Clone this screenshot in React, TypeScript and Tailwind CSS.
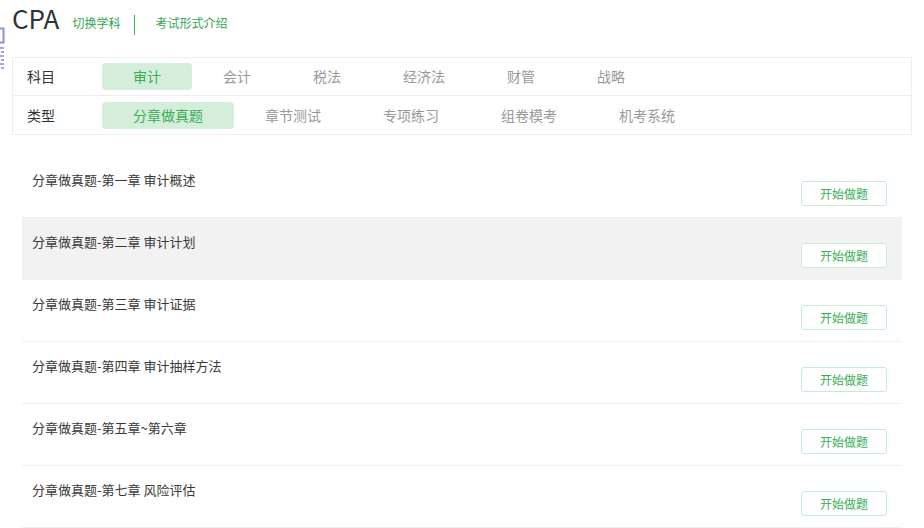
const subjects = ["审计", "会计", "税法", "经济法", "财管", "战略"] as const;
const types = ["分章做真题", "章节测试", "专项练习", "组卷模考", "机考系统"] as const;

const chapters = [
  "分章做真题-第一章 审计概述",
  "分章做真题-第二章 审计计划",
  "分章做真题-第三章 审计证据",
  "分章做真题-第四章 审计抽样方法",
  "分章做真题-第五章~第六章",
  "分章做真题-第七章 风险评估",
];

function FilterRow({
  label,
  items,
  active,
  last,
}: {
  label: string;
  items: readonly string[];
  active: string;
  last?: boolean;
}) {
  return (
    <div className={`flex h-[38px] items-center ${last ? "" : "border-b border-[#eeeeee]"}`}>
      <div className="w-[89px] pl-[14px] text-[14px] text-[#333]">{label}</div>
      <div className="flex items-center">
        {items.map((item) => (
          <div
            key={item}
            className={`flex h-[27px] items-center rounded-[4px] px-[31px] text-[14px] ${
              item === active ? "bg-[#d5eddb] text-[#3aae55]" : "text-[#999]"
            }`}
          >
            {item}
          </div>
        ))}
      </div>
    </div>
  );
}

export default function App() {
  return (
    <div
      className="relative min-h-[528px] w-[924px] overflow-hidden bg-white"
      style={{ fontFamily: '"Noto Sans CJK SC", "Noto Sans", sans-serif' }}
    >
      <svg className="absolute left-0 top-[27px]" width="5" height="44" aria-hidden="true">
        <rect x="-3" y="1.5" width="6.5" height="14" fill="none" stroke="#9090dc" strokeWidth="2" />
        <g fill="#a8a8e4">
          <rect x="0" y="20" width="4" height="2" />
          <rect x="1" y="24" width="3" height="2" />
          <rect x="0" y="28" width="4" height="2" />
          <rect x="1" y="32" width="3" height="2" />
          <rect x="0" y="36" width="4" height="2" />
          <rect x="1" y="40" width="3" height="2" />
        </g>
      </svg>

      <div className="ml-3 w-[900px]">
        <header className="flex h-[57px] items-start">
          <div className="mt-[1px] text-[26px] leading-[34px] text-[#333]">CPA</div>
          <span className="ml-[13px] mt-[15px] text-[12px] leading-[16px] text-[#2fa84f]">切换学科</span>
          <span className="ml-[14px] mt-[15px] h-[20px] w-px bg-[#3bb54a]" />
          <span className="ml-[20px] mt-[15px] text-[12px] leading-[16px] text-[#2fa84f]">考试形式介绍</span>
        </header>

        <div className="border border-[#eeeeee]">
          <FilterRow label="科目" items={subjects} active="审计" />
          <FilterRow label="类型" items={types} active="分章做真题" last />
        </div>

        <ul className="ml-[10px] mt-[21px] w-[880px]">
          {chapters.map((title, i) => (
            <li
              key={title}
              className={`flex h-[62px] items-start justify-between border-b pl-[10px] pr-[15px] ${
                i === 1 ? "border-[#f2f2f2] bg-[#f2f2f2]" : "border-[#f0f0f0]"
              }`}
            >
              <span className="mt-[15px] text-[13px] leading-[18px] text-[#3a3a3a]">{title}</span>
              <button className="mt-[25px] h-[25px] w-[86px] rounded-[3px] border border-[#c5ebd0] bg-white text-[12px] text-[#3aae55]">
                开始做题
              </button>
            </li>
          ))}
        </ul>
      </div>
    </div>
  );
}
